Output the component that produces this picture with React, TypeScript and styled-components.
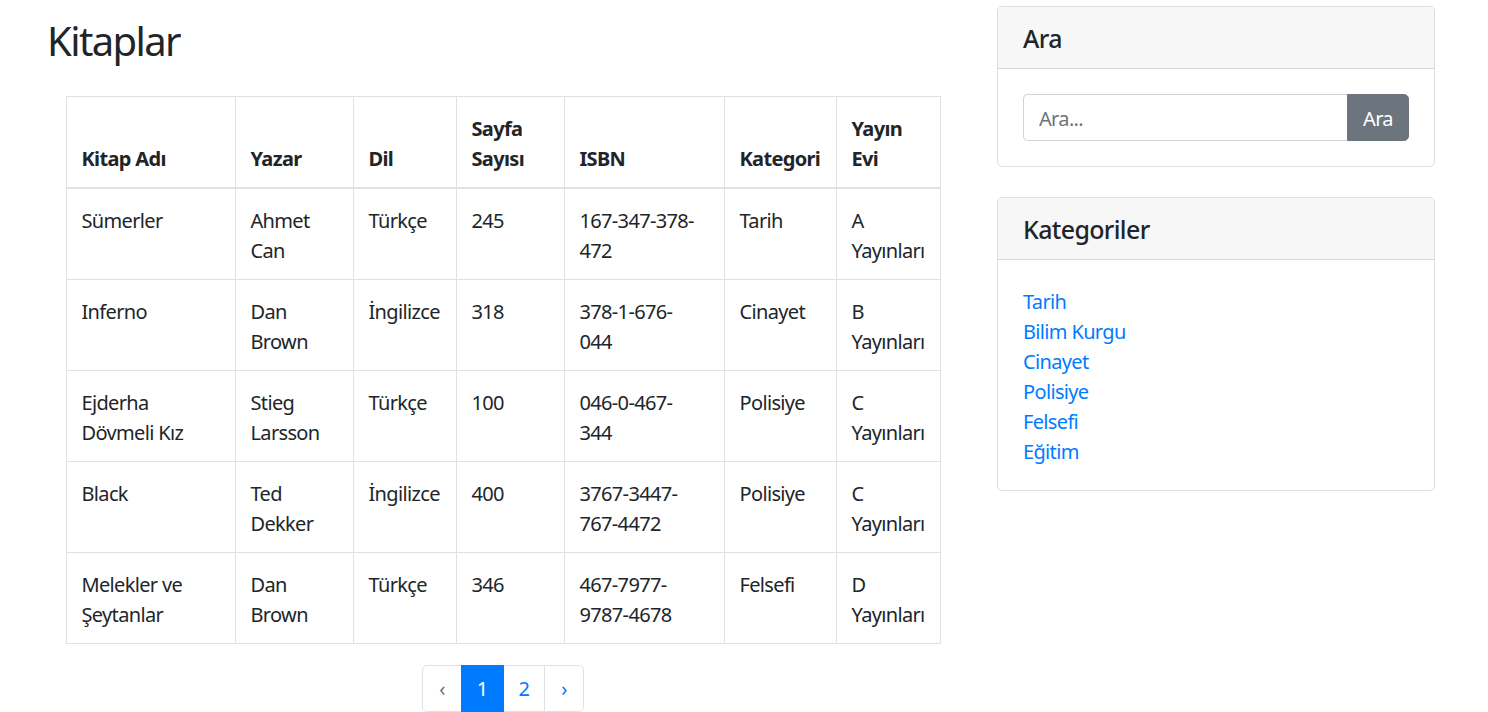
import React from "react";
import styled, { createGlobalStyle } from "styled-components";

const GlobalStyle = createGlobalStyle`
  html, body { margin: 0; padding: 0; background: #fff; }
  body {
    font-family: "Noto Sans", "Open Sans", sans-serif;
    font-size: 20px;
    line-height: 30px;
    color: #212529;
    letter-spacing: -0.033em;
  }
  * { box-sizing: border-box; }
`;

const Page = styled.div`
  display: grid;
  grid-template-columns: 916px 438px;
  column-gap: 37px;
  padding-left: 44px;
  align-items: start;
`;

const Main = styled.main`
  display: flex;
  flex-direction: column;
`;

const Title = styled.h1`
  margin: 17px 0 31px 3px;
  font-size: 40px;
  line-height: 48px;
  font-weight: 400;
  letter-spacing: -0.04em;
`;

const TableBlock = styled.div`
  margin-left: 22px;
  width: 874px;
  display: flex;
  flex-direction: column;
  align-items: center;
`;

const Table = styled.table`
  width: 874px;
  table-layout: fixed;
  border-collapse: collapse;
  border: 1px solid #dee2e6;
`;

const Th = styled.th`
  padding: 17px 15px 13px;
  text-align: left;
  vertical-align: bottom;
  font-weight: 700;
  border: 1px solid #dee2e6;
  border-bottom: 2px solid #dee2e6;
`;

const Td = styled.td<{ $tight?: boolean }>`
  padding: 17px ${(p) => (p.$tight ? "24px" : "15px")} 13px 15px;
  vertical-align: top;
  border: 1px solid #dee2e6;
`;

const Pager = styled.ul`
  display: flex;
  list-style: none;
  margin: 21px 0 0;
  padding: 0;
`;

const PageLink = styled.a<{ $active?: boolean; $disabled?: boolean; $first?: boolean; $last?: boolean }>`
  display: block;
  padding: 10px ${(p) => (p.$first || p.$last ? "16px" : "15px")};
  line-height: 25px;
  margin-left: ${(p) => (p.$first ? "0" : "-1px")};
  border: 1px solid ${(p) => (p.$active ? "#007bff" : "#dee2e6")};
  background: ${(p) => (p.$active ? "#007bff" : "#fff")};
  color: ${(p) => (p.$active ? "#fff" : p.$disabled ? "#6c757d" : "#007bff")};
  text-decoration: none;
  position: relative;
  z-index: ${(p) => (p.$active ? 1 : 0)};
  border-radius: ${(p) => (p.$first ? "5px 0 0 5px" : p.$last ? "0 5px 5px 0" : "0")};
`;

const Side = styled.aside`
  display: flex;
  flex-direction: column;
  gap: 30px;
  padding-top: 6px;
`;

const Card = styled.section`
  border: 1px solid rgba(0, 0, 0, 0.125);
  border-radius: 5px;
  overflow: hidden;
`;

const CardHeader = styled.div`
  background: #f7f7f7;
  border-bottom: 1px solid rgba(0, 0, 0, 0.125);
  padding: 15px 25px;
`;

const CardTitle = styled.h4`
  margin: 0;
  font-size: 25px;
  line-height: 31px;
  font-weight: 500;
  padding-top: 1px;
  margin-bottom: -1px;
`;

const CardBody = styled.div<{ $textShift?: boolean }>`
  padding: ${(p) => (p.$textShift ? "27px 25px 23px" : "25px")};
`;

const InputGroup = styled.div`
  display: flex;
  height: 47px;
`;

const Input = styled.input`
  flex: 1;
  min-width: 0;
  font: inherit;
  letter-spacing: inherit;
  color: #495057;
  padding: 8px 15px 6px;
  border: 1px solid #ced4da;
  border-right: none;
  border-radius: 5px 0 0 5px;
  outline: none;
  &::placeholder { color: #6c757d; }
`;

const Button = styled.button`
  font: inherit;
  letter-spacing: inherit;
  width: 62px;
  background: #6c757d;
  color: #fff;
  border: 1px solid #6c757d;
  border-radius: 0 5px 5px 0;
  padding: 2px 0 0;
`;

const LinkList = styled.ul`
  list-style: none;
  margin: 0;
  padding: 0;
`;

const CatLink = styled.a`
  color: #007bff;
  text-decoration: none;
`;

const widths = [169, 118, 103, 108, 160, 112, 104];
const heads = ["Kitap Adı", "Yazar", "Dil", "Sayfa Sayısı", "ISBN", "Kategori", "Yayın Evi"];
const rows = [
  ["Sümerler", "Ahmet Can", "Türkçe", "245", "167-347-378-472", "Tarih", "A Yayınları"],
  ["Inferno", "Dan Brown", "İngilizce", "318", "378-1-676-044", "Cinayet", "B Yayınları"],
  ["Ejderha Dövmeli Kız", "Stieg Larsson", "Türkçe", "100", "046-0-467-344", "Polisiye", "C Yayınları"],
  ["Black", "Ted Dekker", "İngilizce", "400", "3767-3447-767-4472", "Polisiye", "C Yayınları"],
  ["Melekler ve Şeytanlar", "Dan Brown", "Türkçe", "346", "467-7977-9787-4678", "Felsefi", "D Yayınları"],
];
const cats = ["Tarih", "Bilim Kurgu", "Cinayet", "Polisiye", "Felsefi", "Eğitim"];

export default function App() {
  return (
    <>
      <GlobalStyle />
      <Page>
        <Main>
          <Title>Kitaplar</Title>
          <TableBlock>
            <Table>
              <colgroup>
                {widths.map((w, i) => (
                  <col key={i} style={{ width: w }} />
                ))}
              </colgroup>
              <thead>
                <tr>
                  {heads.map((h) => (
                    <Th key={h}>{h}</Th>
                  ))}
                </tr>
              </thead>
              <tbody>
                {rows.map((r, i) => (
                  <tr key={i}>
                    {r.map((c, j) => (
                      <Td key={j} $tight={j === 4}>{c}</Td>
                    ))}
                  </tr>
                ))}
              </tbody>
            </Table>
            <Pager>
              <li><PageLink $first $disabled>‹</PageLink></li>
              <li><PageLink $active href="#">1</PageLink></li>
              <li><PageLink href="#">2</PageLink></li>
              <li><PageLink $last href="#">›</PageLink></li>
            </Pager>
          </TableBlock>
        </Main>
        <Side>
          <Card>
            <CardHeader>
              <CardTitle>Ara</CardTitle>
            </CardHeader>
            <CardBody>
              <InputGroup>
                <Input placeholder="Ara..." />
                <Button>Ara</Button>
              </InputGroup>
            </CardBody>
          </Card>
          <Card>
            <CardHeader>
              <CardTitle>Kategoriler</CardTitle>
            </CardHeader>
            <CardBody $textShift>
              <LinkList>
                {cats.map((c) => (
                  <li key={c}>
                    <CatLink href="#">{c}</CatLink>
                  </li>
                ))}
              </LinkList>
            </CardBody>
          </Card>
        </Side>
      </Page>
    </>
  );
}
